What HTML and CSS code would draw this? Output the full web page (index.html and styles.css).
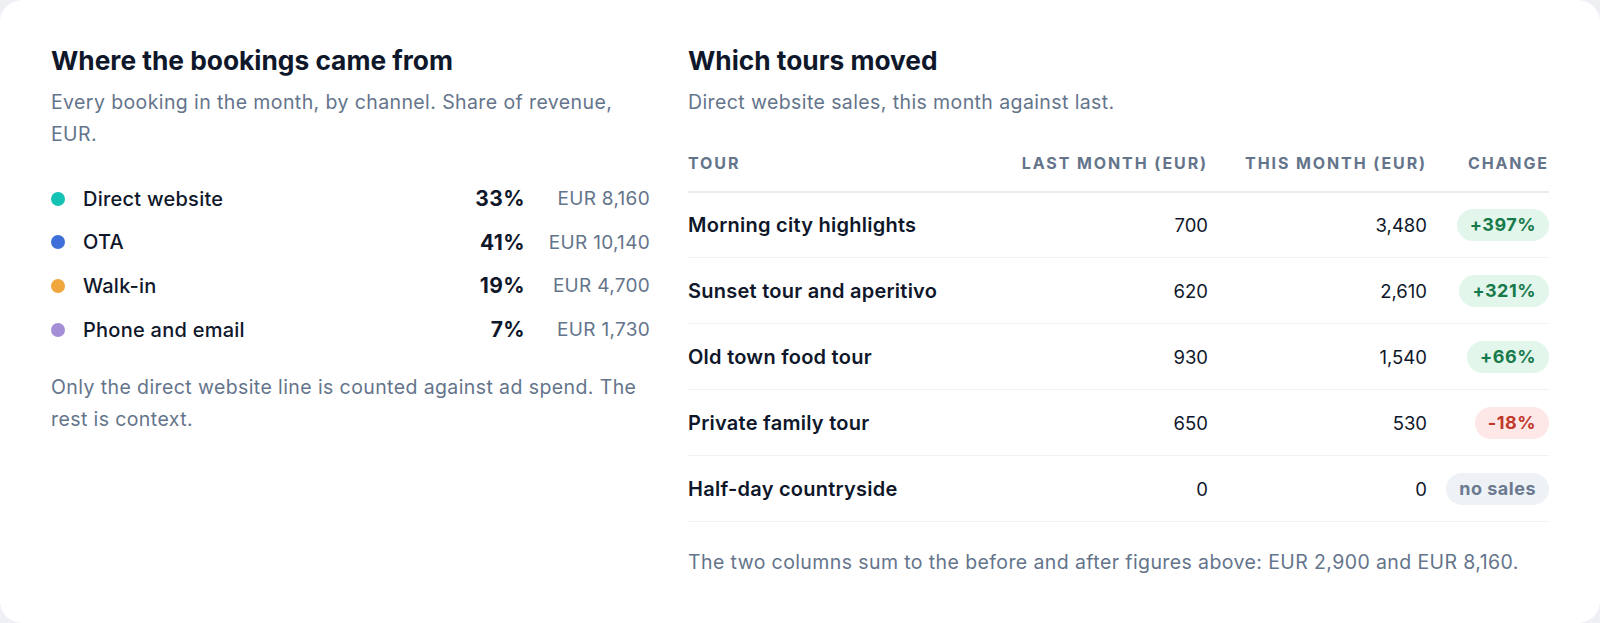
FILE: index.html
```html
<!DOCTYPE html>
<html lang="en">
<head>
<meta charset="utf-8">
<title>Bookings</title>
<link rel="stylesheet" href="styles.css">
</head>
<body>
<div class="card">
  <section class="col col-left">
    <h2 class="title">Where the bookings came from</h2>
    <p class="sub">Every booking in the month, by channel. Share of revenue, EUR.</p>
    <ul class="channels">
      <li class="ch"><span class="dot dot-teal"></span><span class="ch-name">Direct website</span><span class="ch-pct">33%</span><span class="ch-val">EUR 8,160</span></li>
      <li class="ch"><span class="dot dot-blue"></span><span class="ch-name">OTA</span><span class="ch-pct">41%</span><span class="ch-val">EUR 10,140</span></li>
      <li class="ch"><span class="dot dot-orange"></span><span class="ch-name">Walk-in</span><span class="ch-pct">19%</span><span class="ch-val">EUR 4,700</span></li>
      <li class="ch"><span class="dot dot-purple"></span><span class="ch-name">Phone and email</span><span class="ch-pct">7%</span><span class="ch-val">EUR 1,730</span></li>
    </ul>
    <p class="note">Only the direct website line is counted against ad spend. The rest is context.</p>
  </section>
  <section class="col col-right">
    <h2 class="title">Which tours moved</h2>
    <p class="sub">Direct website sales, this month against last.</p>
    <table class="tours">
      <colgroup><col class="c1"><col class="c2"><col class="c3"><col class="c4"></colgroup>
      <thead>
        <tr><th class="l">Tour</th><th>Last month (EUR)</th><th>This month (EUR)</th><th>Change</th></tr>
      </thead>
      <tbody>
        <tr><td class="name">Morning city highlights</td><td>700</td><td>3,480</td><td><span class="badge up">+397%</span></td></tr>
        <tr><td class="name">Sunset tour and aperitivo</td><td>620</td><td>2,610</td><td><span class="badge up">+321%</span></td></tr>
        <tr><td class="name">Old town food tour</td><td>930</td><td>1,540</td><td><span class="badge up">+66%</span></td></tr>
        <tr><td class="name">Private family tour</td><td>650</td><td>530</td><td><span class="badge down">-18%</span></td></tr>
        <tr><td class="name">Half-day countryside</td><td>0</td><td>0</td><td><span class="badge none">no sales</span></td></tr>
      </tbody>
    </table>
    <p class="note note-right">The two columns sum to the before and after figures above: EUR 2,900 and EUR 8,160.</p>
  </section>
</div>
</body>
</html>
```

FILE: styles.css
```css
* { box-sizing: border-box; }
html, body { margin: 0; padding: 0; }
body {
  background: #eef0f3;
  font-family: Inter, "Noto Sans", "Liberation Sans", sans-serif;
  color: #0f172a;
}
.card {
  background: #ffffff;
  width: 1600px;
  height: 623px;
  border-radius: 22px;
  padding: 45px 51px 0 51px;
  display: grid;
  grid-template-columns: 599px 1fr;
  column-gap: 38px;
}
.title {
  margin: 0;
  font-size: 26.3px;
  line-height: 32px;
  font-weight: 700;
  letter-spacing: 0;
  color: #0f172a;
}
.sub {
  margin: 10px 0 0 0;
  font-size: 19.5px;
  line-height: 31.5px;
  letter-spacing: 0.4px;
  color: #64748b;
}
.channels {
  list-style: none;
  margin: 27px 0 0 0;
  padding: 0;
}
.ch {
  display: grid;
  grid-template-columns: 14px 1fr auto 104px;
  align-items: center;
  height: 43.6px;
}
.dot {
  width: 14px;
  height: 14px;
  border-radius: 50%;
}
.dot-teal { background: #14c3b4; }
.dot-blue { background: #3f6fd8; }
.dot-orange { background: #f0a63c; }
.dot-purple { background: #a48fd6; }
.ch-name {
  padding-left: 18px;
  font-size: 20px;
  letter-spacing: 0.25px;
  font-weight: 500;
  color: #0f172a;
}
.ch-pct {
  font-size: 21px;
  letter-spacing: 0.4px;
  font-weight: 700;
  color: #0f172a;
  text-align: right;
  padding-right: 21px;
}
.ch-val {
  font-size: 19px;
  letter-spacing: 0.3px;
  color: #64748b;
  text-align: right;
}
.note {
  margin: 21px 0 0 0;
  font-size: 19.5px;
  line-height: 31.5px;
  letter-spacing: 0.4px;
  color: #64748b;
}
.tours {
  width: 100%;
  border-collapse: collapse;
  margin-top: 34px;
  table-layout: fixed;
}
.c1 { width: auto; }
.c2 { width: 220px; }
.c3 { width: 219px; }
.c4 { width: 122px; }
.tours th {
  font-size: 16px;
  line-height: 20px;
  font-weight: 700;
  text-transform: uppercase;
  letter-spacing: 1.9px;
  color: #64748b;
  text-align: right;
  padding: 0 0 18px 0;
  border-bottom: 2px solid #e8ecf1;
}
.tours th.l { text-align: left; }
.tours td {
  height: 66px;
  padding: 0;
  text-align: right;
  font-size: 18.5px;
  color: #0f172a;
  border-bottom: 1px solid #eef1f5;
  vertical-align: middle;
}
.tours td.name {
  text-align: left;
  font-size: 20px;
  letter-spacing: 0.25px;
  font-weight: 600;
}
.badge {
  display: inline-block;
  height: 32px;
  line-height: 32px;
  padding: 0 13px;
  border-radius: 16px;
  font-size: 18px;
  letter-spacing: 0.5px;
  font-weight: 700;
}
.badge.up { background: #e3f6ec; color: #177a4b; }
.badge.down { background: #fde7e7; color: #c0392b; }
.badge.none { background: #eef2f6; color: #6b7a90; }
.note-right { margin-top: 25px; }
```
